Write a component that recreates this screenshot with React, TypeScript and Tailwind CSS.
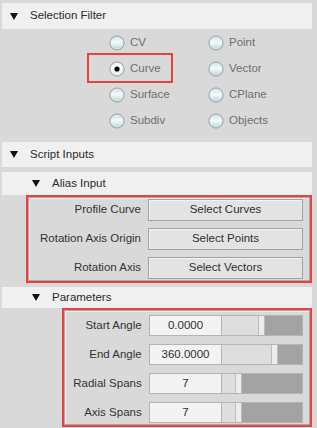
import React from "react";

const Arrow = () => (
  <svg width="8" height="7" viewBox="0 0 8 7" className="shrink-0">
    <polygon points="0,0 8,0 4,7" fill="#111" />
  </svg>
);

const Header = ({ title, indent, h }: { title: string; indent: number; h: string }) => (
  <div className={`flex items-center bg-[#f0f0f0] ${h}`}>
    <div style={{ width: indent }} className="shrink-0" />
    <Arrow />
    <span className="ml-[12px] text-[#2a2a2a]">{title}</span>
  </div>
);

const Radio = ({ checked, id }: { checked?: boolean; id: string }) => (
  <svg width="16" height="16" viewBox="0 0 16 16" className="shrink-0">
    <defs>
      <linearGradient id={id} x1="0" y1="0" x2="0" y2="1">
        <stop offset="0" stopColor={checked ? "#f2f6f6" : "#c9dde0"} />
        <stop offset="0.45" stopColor={checked ? "#ffffff" : "#f4fafa"} />
        <stop offset="0.6" stopColor={checked ? "#f6f9f9" : "#e6f1f2"} />
        <stop offset="1" stopColor={checked ? "#dfe8e9" : "#b4cdd1"} />
      </linearGradient>
    </defs>
    <circle cx="8" cy="8" r="7" fill={`url(#${id})`} stroke="#8b9a9e" strokeWidth="1" />
    <circle cx="8" cy="8" r="6" fill="none" stroke="#e9f2f3" strokeWidth="0.8" opacity="0.7" />
    {checked && <circle cx="8" cy="8" r="2.6" fill="#000" />}
  </svg>
);

const RadioItem = ({ label, checked, id }: { label: string; checked?: boolean; id: string }) => (
  <div className="flex items-center h-[26px]">
    <Radio checked={checked} id={id} />
    <span className="ml-[5px] text-[#6f6f6f]">{label}</span>
  </div>
);

const Button = ({ label }: { label: string }) => (
  <div className="w-[155px] h-[22px] flex items-center justify-center bg-[#e3e3e3] border border-[#a3a3a3] shadow-[inset_1px_1px_0_#f2f2f2] text-[#2f2f2f]">
    {label}
  </div>
);

const ParamRow = ({ label, value, thumb }: { label: string; value: string; thumb: number }) => (
  <div className="flex items-center h-[21px]">
    <div className="w-[77px] text-right pr-[0px] text-[#333]">{label}</div>
    <div className="w-[7px]" />
    <div className="w-[74px] h-[21px] flex items-center justify-center bg-[#f3f3f3] border border-[#b4b4b4] text-[#2f2f2f]">
      {value}
    </div>
    <div className="w-[81px] h-[21px] flex border border-l-0 border-[#b4b4b4] bg-[#a3a3a3]">
      <div style={{ width: thumb }} className="h-full bg-[#dedede]" />
      <div className="w-[7px] h-full bg-[#ececec] border-l border-r border-[#bdbdbd]" />
      <div className="flex-1 h-full bg-[#a3a3a3]" />
    </div>
  </div>
);

export default function App() {
  return (
    <div className="w-[317px] h-[428px] overflow-hidden bg-[#d9d9d9] font-['Liberation_Sans',Arial,sans-serif] text-[11.5px] leading-none">
      <div className="pt-[3px] pl-[2px] pr-[5px]">
        <Header title="Selection Filter" indent={8} h="h-[26px]" />
        <div className="relative h-[113px] pt-[1px] pl-[107px]">
          <div className="grid grid-cols-[99px_100px]">
            <RadioItem label="CV" id="r1" />
            <RadioItem label="Point" id="r2" />
            <RadioItem label="Curve" checked id="r3" />
            <RadioItem label="Vector" id="r4" />
            <RadioItem label="Surface" id="r5" />
            <RadioItem label="CPlane" id="r6" />
            <RadioItem label="Subdiv" id="r7" />
            <RadioItem label="Objects" id="r8" />
          </div>
          <div className="absolute left-[85px] top-[24px] w-[86px] h-[30px] border-2 border-[#e8413f]" />
        </div>
        <Header title="Script Inputs" indent={8} h="h-[25px]" />
        <div className="h-[5px]" />
        <Header title="Alias Input" indent={30} h="h-[23px]" />
        <div className="ml-[24px] border-2 border-[#e8413f]">
          <div className="border border-[#a9a9a9] shadow-[inset_1px_1px_0_#ececec] px-[6px] pt-[1px] pb-[1px] flex flex-col gap-[7px]">
            {[
              ["Profile Curve", "Select Curves"],
              ["Rotation Axis Origin", "Select Points"],
              ["Rotation Axis", "Select Vectors"],
            ].map(([l, b]) => (
              <div key={l} className="flex items-center h-[22px]">
                <div className="w-[106px] text-right text-[#333] whitespace-nowrap">{l}</div>
                <div className="w-[7px]" />
                <Button label={b} />
              </div>
            ))}
          </div>
        </div>
        <div className="h-[4px]" />
        <Header title="Parameters" indent={30} h="h-[21px]" />
        <div className="ml-[60px] border-2 border-[#e8413f]">
          <div className="border border-[#a9a9a9] shadow-[inset_1px_1px_0_#ececec] pl-[0px] pr-[6px] pt-[4px] pb-[1px] flex flex-col gap-[8px]">
            <ParamRow label="Start Angle" value="0.0000" thumb={36} />
            <ParamRow label="End Angle" value="360.0000" thumb={49} />
            <ParamRow label="Radial Spans" value="7" thumb={13} />
            <ParamRow label="Axis Spans" value="7" thumb={13} />
          </div>
        </div>
      </div>
    </div>
  );
}
